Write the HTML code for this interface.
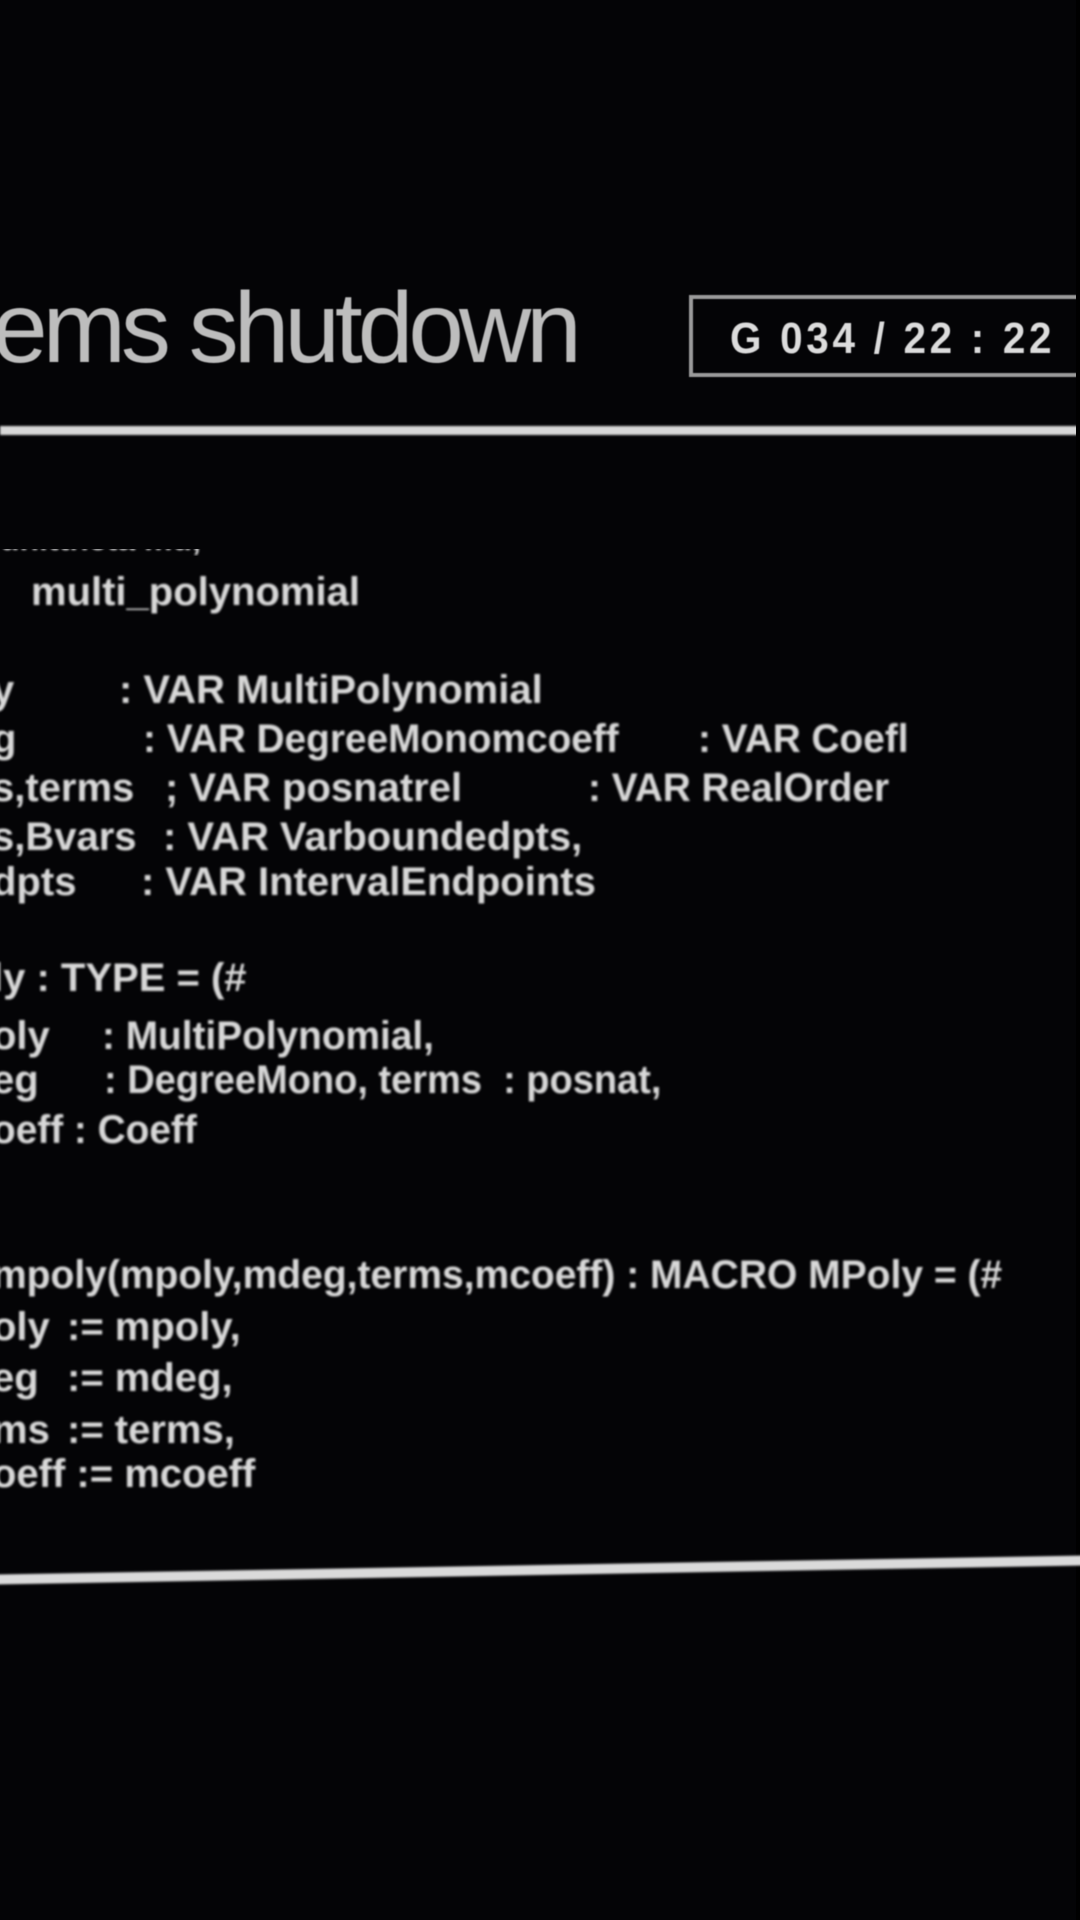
<!DOCTYPE html>
<html><head><meta charset="utf-8"><style>
html,body{margin:0;padding:0;background:#040406;}
body{width:1080px;height:1920px;position:relative;overflow:hidden;}
.t{position:absolute;white-space:pre;font-family:"Liberation Sans",sans-serif;}
.c{position:absolute;white-space:pre;font-family:"Liberation Sans",sans-serif;font-weight:bold;font-size:40px;color:#d8d8d8;line-height:1;filter:blur(1px);transform-origin:left;}
.s{transform:scaleX(0.97);}
</style></head><body>
<div class="t" style="left:-8px;top:278px;font-size:100px;color:#bdbdbd;letter-spacing:-5px;line-height:1;filter:blur(0.6px)">ems shutdown</div>
<div style="position:absolute;left:689px;top:295px;width:400px;height:74px;border:4px solid #9a9a9a;filter:blur(0.6px)"></div>
<div class="t" style="left:730px;top:317px;font-size:44px;font-weight:bold;color:#dcdcdc;line-height:1;transform:scaleX(0.92);transform-origin:left;letter-spacing:4px;filter:blur(0.6px)">G 034 / 22 : 22</div>
<div style="position:absolute;left:0;top:426px;width:1080px;height:9px;background:#d8d8d8;filter:blur(1px)"></div>
<div style="position:absolute;left:1076px;top:0;width:4px;height:1920px;background:#000"></div>

<div style="position:absolute;left:0;top:549px;width:240px;height:7px;overflow:hidden"><div class="c" style="left:0;top:-26px;font-size:32px">unittheta mu,</div></div>
<div class="c" style="left:31px;top:572px">multi_polynomial</div>

<div class="c" style="left:-8px;top:670px">y</div><div class="c" style="left:119px;top:670px">: VAR MultiPolynomial</div>
<div class="c" style="left:-8px;top:719px">g</div><div class="c s" style="left:143px;top:719px">: VAR DegreeMonomcoeff</div><div class="c s" style="left:698px;top:719px">: VAR Coefl</div>
<div class="c" style="left:-8px;top:768px">s,terms</div><div class="c" style="left:165px;top:768px">; VAR posnatrel</div><div class="c s" style="left:588px;top:768px">: VAR RealOrder</div>
<div class="c" style="left:-8px;top:817px">s,Bvars</div><div class="c" style="left:163px;top:817px">: VAR Varboundedpts,</div>
<div class="c" style="left:-8px;top:862px">dpts</div><div class="c" style="left:141px;top:862px">: VAR IntervalEndpoints</div>

<div class="c" style="left:-8px;top:958px">ly : TYPE = (#</div>
<div class="c" style="left:-8px;top:1016px">oly</div><div class="c s" style="left:102px;top:1016px">: MultiPolynomial,</div>
<div class="c" style="left:-8px;top:1060px">eg</div><div class="c" style="left:104px;top:1060px;transform:scaleX(0.95)">: DegreeMono, terms  : posnat,</div>
<div class="c s" style="left:-8px;top:1110px">oeff : Coeff</div>

<div class="c" style="left:-8px;top:1255px;transform:scaleX(0.975)">mpoly(mpoly,mdeg,terms,mcoeff) : MACRO MPoly = (#</div>
<div class="c" style="left:-8px;top:1307px">oly</div><div class="c" style="left:67px;top:1307px">:= mpoly,</div>
<div class="c" style="left:-8px;top:1358px">eg</div><div class="c" style="left:67px;top:1358px">:= mdeg,</div>
<div class="c" style="left:-8px;top:1410px">ms</div><div class="c" style="left:67px;top:1410px">:= terms,</div>
<div class="c" style="left:-8px;top:1454px">oeff := mcoeff</div>

<div style="position:absolute;left:-10px;top:1565px;width:1100px;height:10px;background:#dadada;transform:rotate(-1deg);filter:blur(1px)"></div>
</body></html>
